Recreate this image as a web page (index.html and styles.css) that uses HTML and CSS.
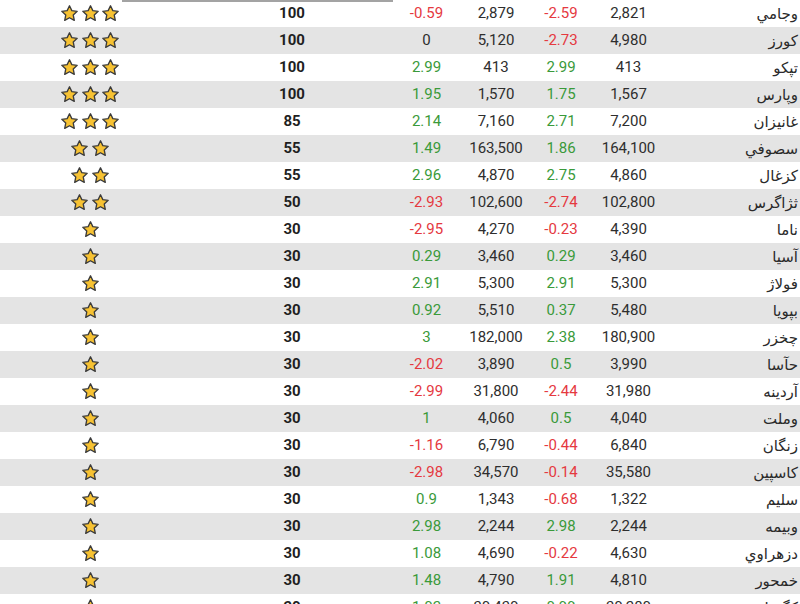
FILE: index.html
```html
<!DOCTYPE html>
<html lang="fa">
<head>
<meta charset="utf-8">
<title>جدول سهام</title>
<link rel="stylesheet" href="styles.css">
</head>
<body>
<svg class="defs" width="0" height="0" aria-hidden="true">
  <symbol id="star" viewBox="0 0 24 24">
    <path d="M12 2.2l2.95 6.2 6.75.85-4.95 4.7 1.3 6.75L12 17.4l-6.05 3.3 1.3-6.75-4.95-4.7 6.75-.85z" fill="#f7c233" stroke="#3b3b3b" stroke-width="1.7" stroke-linejoin="round"/>
  </symbol>
</svg>
<div class="table">
  <div class="topline"></div>

  <div class="row"><div class="c stars"><svg class="star"><use href="#star"/></svg><svg class="star"><use href="#star"/></svg><svg class="star"><use href="#star"/></svg></div><div class="c score">100</div><div class="c neg">-0.59</div><div class="c">2,879</div><div class="c neg">-2.59</div><div class="c">2,821</div><div class="name">وجامي</div></div>
  <div class="row"><div class="c stars"><svg class="star"><use href="#star"/></svg><svg class="star"><use href="#star"/></svg><svg class="star"><use href="#star"/></svg></div><div class="c score">100</div><div class="c">0</div><div class="c">5,120</div><div class="c neg">-2.73</div><div class="c">4,980</div><div class="name">كورز</div></div>
  <div class="row"><div class="c stars"><svg class="star"><use href="#star"/></svg><svg class="star"><use href="#star"/></svg><svg class="star"><use href="#star"/></svg></div><div class="c score">100</div><div class="c pos">2.99</div><div class="c">413</div><div class="c pos">2.99</div><div class="c">413</div><div class="name">تپكو</div></div>
  <div class="row"><div class="c stars"><svg class="star"><use href="#star"/></svg><svg class="star"><use href="#star"/></svg><svg class="star"><use href="#star"/></svg></div><div class="c score">100</div><div class="c pos">1.95</div><div class="c">1,570</div><div class="c pos">1.75</div><div class="c">1,567</div><div class="name">وپارس</div></div>
  <div class="row"><div class="c stars"><svg class="star"><use href="#star"/></svg><svg class="star"><use href="#star"/></svg><svg class="star"><use href="#star"/></svg></div><div class="c score">85</div><div class="c pos">2.14</div><div class="c">7,160</div><div class="c pos">2.71</div><div class="c">7,200</div><div class="name">غانيزان</div></div>
  <div class="row"><div class="c stars"><svg class="star"><use href="#star"/></svg><svg class="star"><use href="#star"/></svg></div><div class="c score">55</div><div class="c pos">1.49</div><div class="c">163,500</div><div class="c pos">1.86</div><div class="c">164,100</div><div class="name">سصوفي</div></div>
  <div class="row"><div class="c stars"><svg class="star"><use href="#star"/></svg><svg class="star"><use href="#star"/></svg></div><div class="c score">55</div><div class="c pos">2.96</div><div class="c">4,870</div><div class="c pos">2.75</div><div class="c">4,860</div><div class="name">كزغال</div></div>
  <div class="row"><div class="c stars"><svg class="star"><use href="#star"/></svg><svg class="star"><use href="#star"/></svg></div><div class="c score">50</div><div class="c neg">-2.93</div><div class="c">102,600</div><div class="c neg">-2.74</div><div class="c">102,800</div><div class="name">ثژاگرس</div></div>
  <div class="row"><div class="c stars"><svg class="star"><use href="#star"/></svg></div><div class="c score">30</div><div class="c neg">-2.95</div><div class="c">4,270</div><div class="c neg">-0.23</div><div class="c">4,390</div><div class="name">ناما</div></div>
  <div class="row"><div class="c stars"><svg class="star"><use href="#star"/></svg></div><div class="c score">30</div><div class="c pos">0.29</div><div class="c">3,460</div><div class="c pos">0.29</div><div class="c">3,460</div><div class="name">آسيا</div></div>
  <div class="row"><div class="c stars"><svg class="star"><use href="#star"/></svg></div><div class="c score">30</div><div class="c pos">2.91</div><div class="c">5,300</div><div class="c pos">2.91</div><div class="c">5,300</div><div class="name">فولاژ</div></div>
  <div class="row"><div class="c stars"><svg class="star"><use href="#star"/></svg></div><div class="c score">30</div><div class="c pos">0.92</div><div class="c">5,510</div><div class="c pos">0.37</div><div class="c">5,480</div><div class="name">بپويا</div></div>
  <div class="row"><div class="c stars"><svg class="star"><use href="#star"/></svg></div><div class="c score">30</div><div class="c pos">3</div><div class="c">182,000</div><div class="c pos">2.38</div><div class="c">180,900</div><div class="name">چخزر</div></div>
  <div class="row"><div class="c stars"><svg class="star"><use href="#star"/></svg></div><div class="c score">30</div><div class="c neg">-2.02</div><div class="c">3,890</div><div class="c pos">0.5</div><div class="c">3,990</div><div class="name">حآسا</div></div>
  <div class="row"><div class="c stars"><svg class="star"><use href="#star"/></svg></div><div class="c score">30</div><div class="c neg">-2.99</div><div class="c">31,800</div><div class="c neg">-2.44</div><div class="c">31,980</div><div class="name">آردينه</div></div>
  <div class="row"><div class="c stars"><svg class="star"><use href="#star"/></svg></div><div class="c score">30</div><div class="c pos">1</div><div class="c">4,060</div><div class="c pos">0.5</div><div class="c">4,040</div><div class="name">وملت</div></div>
  <div class="row"><div class="c stars"><svg class="star"><use href="#star"/></svg></div><div class="c score">30</div><div class="c neg">-1.16</div><div class="c">6,790</div><div class="c neg">-0.44</div><div class="c">6,840</div><div class="name">زنگان</div></div>
  <div class="row"><div class="c stars"><svg class="star"><use href="#star"/></svg></div><div class="c score">30</div><div class="c neg">-2.98</div><div class="c">34,570</div><div class="c neg">-0.14</div><div class="c">35,580</div><div class="name">كاسپين</div></div>
  <div class="row"><div class="c stars"><svg class="star"><use href="#star"/></svg></div><div class="c score">30</div><div class="c pos">0.9</div><div class="c">1,343</div><div class="c neg">-0.68</div><div class="c">1,322</div><div class="name">سليم</div></div>
  <div class="row"><div class="c stars"><svg class="star"><use href="#star"/></svg></div><div class="c score">30</div><div class="c pos">2.98</div><div class="c">2,244</div><div class="c pos">2.98</div><div class="c">2,244</div><div class="name">وبيمه</div></div>
  <div class="row"><div class="c stars"><svg class="star"><use href="#star"/></svg></div><div class="c score">30</div><div class="c pos">1.08</div><div class="c">4,690</div><div class="c neg">-0.22</div><div class="c">4,630</div><div class="name">دزهراوي</div></div>
  <div class="row"><div class="c stars"><svg class="star"><use href="#star"/></svg></div><div class="c score">30</div><div class="c pos">1.48</div><div class="c">4,790</div><div class="c pos">1.91</div><div class="c">4,810</div><div class="name">خمحور</div></div>
  <div class="row"><div class="c stars"><svg class="star"><use href="#star"/></svg></div><div class="c score">30</div><div class="c pos">1.02</div><div class="c">30,430</div><div class="c pos">0.99</div><div class="c">30,280</div><div class="name">كگشا</div></div>
</div>
</body>
</html>
```

FILE: styles.css
```css
html, body {
  margin: 0;
  padding: 0;
  background: #ffffff;
  overflow: hidden;
}

.defs {
  position: absolute;
  width: 0;
  height: 0;
}

.table {
  position: relative;
  width: 800px;
  font-family: Roboto, "DejaVu Sans", sans-serif;
  font-size: 15px;
  color: #2e2e2e;
}

.topline {
  position: absolute;
  left: 122px;
  top: 0;
  width: 271px;
  height: 2px;
  background: #a3a3a3;
  z-index: 2;
}

.row {
  display: grid;
  grid-template-columns: 179px 226px 43px 96px 34px 101px 1fr;
  height: 27px;
  align-items: center;
  background: #ffffff;
}

.row:nth-child(odd) {
  background: #e4e4e4;
}

.c {
  display: flex;
  justify-content: center;
  align-items: center;
  white-space: nowrap;
  line-height: 27px;
}

.stars {
  gap: 1.5px;
  padding-left: 1px;
}

.star {
  width: 19px;
  height: 19px;
  display: block;
}

.score {
  font-weight: 700;
  color: #1f1f1f;
}

.pos {
  color: #3a9a3a;
}

.neg {
  color: #e5393f;
}

.name {
  direction: rtl;
  text-align: right;
  font-family: "DejaVu Sans", sans-serif;
  font-size: 15px;
  white-space: nowrap;
  padding-right: 2px;
  color: #2a2a2a;
}
```
